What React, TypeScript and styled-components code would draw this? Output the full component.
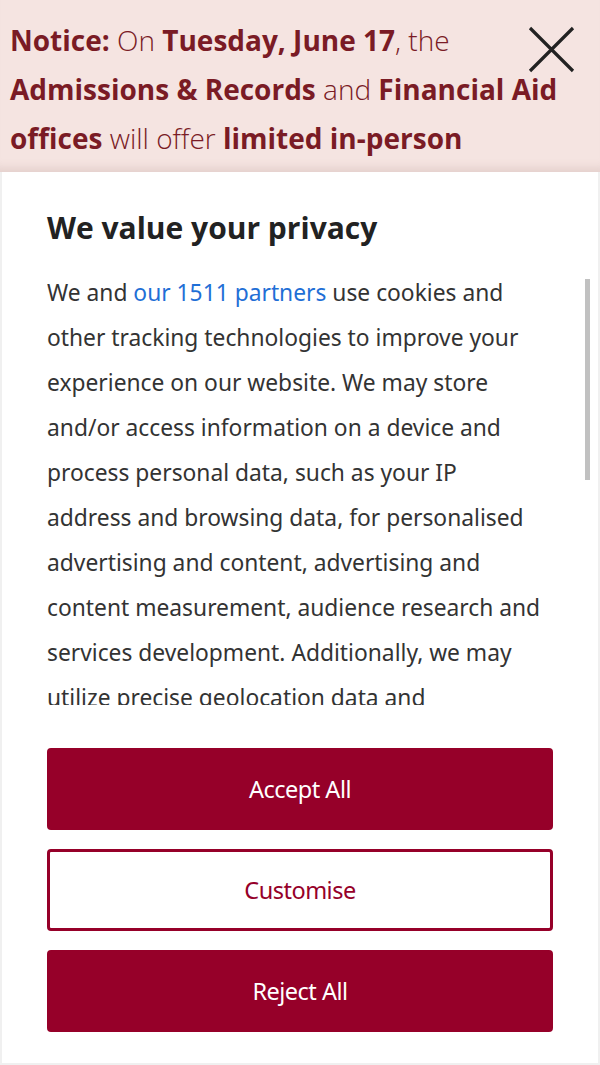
import styled, { createGlobalStyle } from "styled-components";

const GlobalStyle = createGlobalStyle`
  html, body {
    margin: 0;
    padding: 0;
    background: #f0f0f0;
  }
  * {
    box-sizing: border-box;
  }
`;

const Page = styled.div`
  width: 600px;
  height: 1065px;
  overflow: hidden;
  display: flex;
  flex-direction: column;
`;

const Notice = styled.div`
  position: relative;
  height: 172px;
  flex-shrink: 0;
  overflow: hidden;
  background: #f5e4e1;
  padding: 16px 30px 0 10px;
  font-family: "Open Sans", "Noto Sans", sans-serif;
  font-size: 28px;
  font-weight: 300;
  line-height: 49px;
  color: #7a1b25;
  box-shadow: inset 0 -12px 10px -8px rgba(150, 110, 105, 0.18);

  b {
    font-weight: 700;
  }
`;

const CloseButton = styled.button`
  position: absolute;
  top: 26px;
  right: 25px;
  width: 47px;
  height: 47px;
  padding: 0;
  border: 0;
  background: none;
  cursor: pointer;
`;

const Modal = styled.div`
  flex: 1;
  margin: 0 2px 2px;
  background: #ffffff;
  padding: 36px 0 0 45px;
  display: flex;
  flex-direction: column;
`;

const Title = styled.h2`
  margin: 0;
  font-family: "Open Sans", "Noto Sans", sans-serif;
  font-size: 30px;
  font-weight: 700;
  color: #222222;
  line-height: 40px;
`;

const BodyFrame = styled.div`
  position: relative;
  margin-top: 22px;
  margin-right: 8px;
  height: 435px;
  flex-shrink: 0;
`;

const Body = styled.div`
  height: 100%;
  overflow-y: auto;
  padding-right: 46px;
  scrollbar-width: none;
  font-family: "Noto Sans", sans-serif;
  font-size: 22.8px;
  line-height: 45px;
  color: #333333;

  &::-webkit-scrollbar {
    display: none;
  }

  a {
    color: #1f6fd6;
    text-decoration: none;
  }

  p {
    margin: 0;
  }
`;

const ScrollThumb = styled.div`
  position: absolute;
  top: 9px;
  right: 0;
  width: 5px;
  height: 201px;
  background: #c1c1c1;
`;

const Actions = styled.div`
  margin-top: 43px;
  width: 506px;
  display: flex;
  flex-direction: column;
  gap: 19px;
`;

const ActionButton = styled.button<{ $outline?: boolean }>`
  height: 82px;
  border-radius: 4px;
  border: 3px solid #960029;
  background: ${(p) => (p.$outline ? "#ffffff" : "#960029")};
  color: ${(p) => (p.$outline ? "#960029" : "#ffffff")};
  font-family: "Noto Sans", sans-serif;
  font-size: 23.5px;
  letter-spacing: -0.5px;
  cursor: pointer;
`;

function App() {
  return (
    <>
      <GlobalStyle />
      <Page>
        <Notice>
          <b>Notice:</b> On <b>Tuesday, June 17</b>, the{" "}
          <b>Admissions &amp; Records</b> and <b>Financial Aid offices</b> will
          offer <b>limited in-person services</b> from 8:00 a.m. to 12:00 p.m.
          <CloseButton aria-label="Close notice">
            <svg width="47" height="47" viewBox="0 0 47 47">
              <path
                d="M2 2 L45 45 M45 2 L2 45"
                stroke="#222222"
                strokeWidth="3.2"
                fill="none"
              />
            </svg>
          </CloseButton>
        </Notice>
        <Modal>
          <Title>We value your privacy</Title>
          <BodyFrame>
            <Body>
              <p>
                We and <a href="#">our 1511 partners</a> use cookies and other
                tracking technologies to improve your experience on our website.
                We may store and/or access information on a device and process
                personal data, such as your IP address and browsing data, for
                personalised advertising and content, advertising and content
                measurement, audience research and services development.
                Additionally, we may utilize precise geolocation data and
                identification through device scanning. Please note that your
                consent will be valid across all our subdomains. You can change
                or withdraw your consent at any time by clicking the “Consent
                Preferences” button at the bottom of the page. We respect your
                choices and are committed to providing you with a transparent
                and secure browsing experience.
              </p>
            </Body>
            <ScrollThumb />
          </BodyFrame>
          <Actions>
            <ActionButton>Accept All</ActionButton>
            <ActionButton $outline>Customise</ActionButton>
            <ActionButton>Reject All</ActionButton>
          </Actions>
        </Modal>
      </Page>
    </>
  );
}

export default App;
